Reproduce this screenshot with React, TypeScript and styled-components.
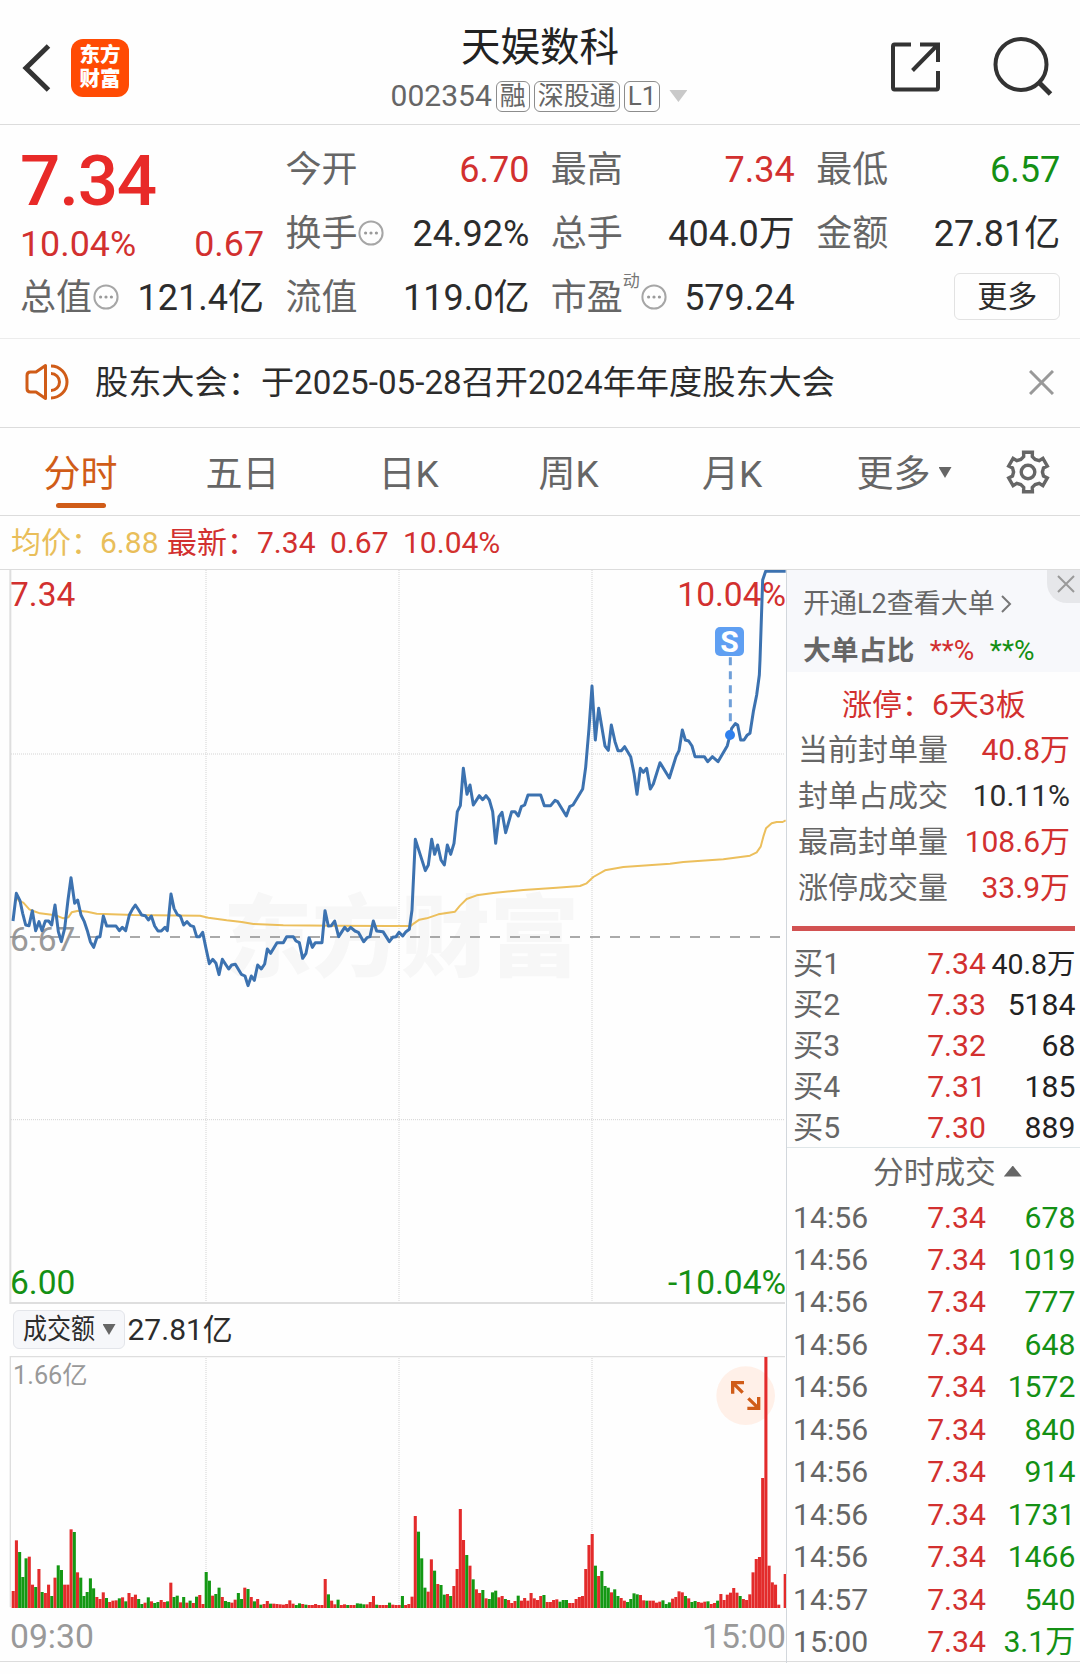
import React from 'react';
import styled, { createGlobalStyle } from 'styled-components';

const c = {
  red: '#d2302f',
  strongRed: '#e82a28',
  green: '#149014',
  ink: '#2c2c2c',
  label: '#666666',
  mute: '#999999',
  line: '#dcdcdc',
  orange: '#d05c18',
  gold: '#e9be5a',
  blue: '#3c72b0',
};

const Global = createGlobalStyle`
  * { box-sizing: border-box; }
  body {
    margin: 0;
    background: #fefefe;
    font-family: Roboto, "Noto Sans CJK SC", sans-serif;
    font-weight: 400;
    line-height: 1.2;
    color: ${c.ink};
  }
  svg { display: block; flex: none; }
`;

const Page = styled.div`
  width: 1080px;
  height: 1674px;
  overflow: hidden;
  display: flex;
  flex-direction: column;
  white-space: nowrap;
`;

/* ---------- header ---------- */
const Header = styled.header`
  height: 125px;
  border-bottom: 1px solid ${c.line};
  display: grid;
  grid-template-columns: 300px 1fr 300px;
`;
const HeaderLeft = styled.div`
  display: flex;
  align-items: center;
  padding: 11px 0 0 20px;
  gap: 18px;
`;
const HeaderRight = styled.div`
  display: flex;
  align-items: center;
  justify-content: flex-end;
  padding: 10.5px 26px 0 0;
  gap: 51.5px;
`;
const Logo = styled.div`
  width: 58px;
  height: 58px;
  border-radius: 12px;
  background: #ff4b04;
  color: #fff;
  font-size: 20.5px;
  line-height: 24.5px;
  font-weight: 900;
  text-align: center;
  padding-top: 4px;
`;
const Heading = styled.div`
  display: flex;
  flex-direction: column;
  align-items: center;
  padding-top: 20px;
`;
const Title = styled.h1`
  margin: 0;
  font-size: 39.5px;
  line-height: 56px;
  font-weight: 400;
  color: #222;
`;
const SubTitle = styled.div`
  display: flex;
  align-items: center;
  height: 40px;
  margin-left: -2px;
  font-size: 30px;
  color: ${c.label};
`;
const Badge = styled.span`
  height: 31px;
  line-height: 29px;
  margin-left: 4px;
  padding: 0 3px;
  border: 1px solid #8c8c8c;
  border-radius: 6px;
  font-size: 26px;
`;
const Caret = styled.i<{ $w: number; $h: number; $color: string; $up?: boolean; $ml: number; $mb?: number }>`
  display: inline-block;
  width: ${p => p.$w}px;
  height: ${p => p.$h}px;
  margin-left: ${p => p.$ml}px;
  margin-bottom: ${p => p.$mb ?? 2}px;
  background: ${p => p.$color};
  clip-path: ${p => (p.$up ? 'polygon(50% 0, 100% 100%, 0 100%)' : 'polygon(0 0, 100% 0, 50% 100%)')};
`;

/* ---------- quote ---------- */
const Quote = styled.section`
  height: 214px;
  padding: 14px 0 0 20px;
  border-bottom: 1px solid #ececec;
  display: grid;
  grid-template-columns: repeat(4, 244px);
  column-gap: 21.4px;
  font-size: 36px;
`;
const QuoteCol = styled.div`
  display: flex;
  flex-direction: column;
`;
const QuoteRow = styled.div<{ $h?: number; $size?: number }>`
  height: ${p => p.$h ?? 64}px;
  font-size: ${p => p.$size ?? 36}px;
  display: flex;
  align-items: center;
  justify-content: space-between;
`;
const Name = styled.span`
  display: flex;
  align-items: center;
  color: ${c.label};
`;
const Num = styled.span<{ $color?: string }>`
  color: ${p => p.$color ?? c.ink};
`;
const BigPrice = styled.div`
  height: 83px;
  line-height: 83px;
  font-size: 71px;
  letter-spacing: -1.2px;
  font-weight: 500;
  color: ${c.strongRed};
`;
const Dyn = styled.sup`
  font-size: 17px;
  line-height: 17px;
  align-self: flex-start;
  margin-top: -4px;
  color: #777;
`;
const MoreButton = styled.button`
  margin: -6px 0 0 auto;
  width: 106px;
  height: 47px;
  padding: 1px 0 0;
  border: 1.5px solid #e2e2e2;
  border-radius: 6px;
  background: transparent;
  font: inherit;
  font-size: 30px;
  color: ${c.ink};
`;

/* ---------- notice ---------- */
const Notice = styled.section`
  height: 89px;
  border-bottom: 1px solid ${c.line};
  padding: 0 26px 2px 24px;
  display: flex;
  align-items: center;
  font-size: 33.2px;
`;
const NoticeText = styled.span`
  flex: 1;
  margin-left: 21px;
  padding-top: 2px;
`;

/* ---------- tabs ---------- */
const Tabs = styled.nav`
  height: 88px;
  border-bottom: 1px solid ${c.line};
  display: grid;
  grid-template-columns: 161px 163px 169px 151px 176px 168px 1fr;
  align-items: center;
  justify-items: center;
`;
const Tab = styled.div<{ $active?: boolean }>`
  display: flex;
  align-items: center;
  height: 87px;
  padding-top: 8px;
  font-size: 37px;
  color: ${p => (p.$active ? c.orange : c.label)};
  position: relative;
  &::after {
    content: '';
    display: ${p => (p.$active ? 'block' : 'none')};
    position: absolute;
    left: 50%;
    bottom: 7px;
    width: 50px;
    height: 5px;
    margin-left: -25px;
    border-radius: 3px;
    background: ${c.orange};
  }
`;
const GearCell = styled.div`
  padding-right: 13px;
`;

/* ---------- legend ---------- */
const Legend = styled.div`
  height: 54px;
  border-bottom: 1px solid ${c.line};
  display: flex;
  align-items: center;
  padding: 1px 0 0 11px;
  font-size: 30px;
  color: ${c.red};
`;
const LegendItem = styled.span<{ $w?: number; $color?: string }>`
  width: ${p => (p.$w ? `${p.$w}px` : 'auto')};
  color: ${p => p.$color ?? 'inherit'};
`;

/* ---------- body ---------- */
const Body = styled.main`
  height: 1092px;
  border-bottom: 1px solid ${c.line};
  display: grid;
  grid-template-columns: 787px 293px;
`;
const Charts = styled.section`
  border-right: 1px solid #d2d7dc;
  display: flex;
  flex-direction: column;
`;
const ChartBox = styled.div<{ $h: number }>`
  position: relative;
  height: ${p => p.$h}px;
`;
const ChartLabel = styled.span<{ $top: number; $right?: boolean; $color: string; $size?: number; $left?: number }>`
  position: absolute;
  top: ${p => p.$top}px;
  ${p => (p.$right ? 'right: 0;' : `left: ${p.$left ?? 10}px;`)}
  font-size: ${p => p.$size ?? 33.5}px;
  line-height: 40px;
  color: ${p => p.$color};
`;
const Watermark = styled.span`
  position: absolute;
  left: 223px;
  top: 309px;
  font-size: 89px;
  line-height: 120px;
  font-weight: 900;
  color: #f7f7f7;
`;
const Layer = styled.svg`
  position: absolute;
  left: 0;
  top: 0;
`;
const Marker = styled.span`
  position: absolute;
  left: 715px;
  top: 57px;
  width: 29px;
  height: 29px;
  border-radius: 5px;
  background: #5f9ff2;
  color: #fff;
  font-size: 30px;
  line-height: 30px;
  font-weight: 700;
  text-align: center;
`;
const TurnoverBar = styled.div`
  height: 51px;
  display: flex;
  align-items: center;
  padding: 0 0 2px 13px;
  font-size: 30px;
`;
const TurnoverSelect = styled.div`
  width: 112px;
  height: 39px;
  display: flex;
  align-items: center;
  justify-content: center;
  background: #f6f7fa;
  border: 1px solid #e3e5ea;
  border-radius: 6px;
  font-size: 24px;
  margin-right: 2.5px;
`;
const Squeezed = styled.span`
  font-size: 28px;
  width: 72px;
  & > span {
    display: inline-block;
    transform: scaleX(0.857);
    transform-origin: left;
  }
`;
const TimeAxis = styled.div`
  height: 54px;
  display: flex;
  align-items: center;
  justify-content: space-between;
  padding: 4px 0 0 10px;
  font-size: 33.7px;
  color: ${c.mute};
`;

/* ---------- side panel ---------- */
const Side = styled.aside`
  display: flex;
  flex-direction: column;
`;
const L2Box = styled.div`
  position: relative;
  height: 102px;
  background: #f7f8fb;
  padding: 11px 0 0 16px;
  color: ${c.label};
`;
const L2Line = styled.div<{ $bold?: boolean }>`
  height: ${p => (p.$bold ? 48 : 46)}px;
  display: flex;
  align-items: center;
  font-size: ${p => (p.$bold ? 27.8 : 27)}px;
  font-weight: ${p => (p.$bold ? 700 : 400)};
`;
const Hidden = styled.span<{ $color: string }>`
  margin-left: 15.5px;
  font-weight: 400;
  font-size: 28px;
  color: ${p => p.$color};
`;
const Dismiss = styled.div`
  position: absolute;
  right: 0;
  top: 0;
  width: 33px;
  height: 33px;
  padding: 5px 0 0 10px;
  background: #e6e7ea;
  border-bottom-left-radius: 20px;
`;
const Limit = styled.div`
  padding: 10px 10px 0 11px;
  height: 254px;
  font-size: 30px;
`;
const LimitTitle = styled.div`
  height: 45px;
  line-height: 45px;
  padding-left: 44px;
  color: ${c.red};
`;
const LimitRow = styled.div`
  height: 46px;
  display: flex;
  align-items: center;
  justify-content: space-between;
`;
const RedBar = styled.div`
  height: 5px;
  margin: 0 5px;
  background: #d25252;
`;
const Orders = styled.div`
  height: 217px;
  padding-top: 12px;
  border-bottom: 1px solid #dfe6e8;
`;
const TradeRow = styled.div<{ $h: number }>`
  height: ${p => p.$h}px;
  padding: 0 4.5px 0 6px;
  display: grid;
  grid-template-columns: 90px 103px 1fr;
  align-items: baseline;
  line-height: ${p => p.$h}px;
  font-size: 30.2px;
  & > :nth-child(1) { color: ${c.label}; }
  & > :nth-child(2) { color: ${c.red}; text-align: right; }
  & > :nth-child(3) { text-align: right; }
`;
const Volume = styled.span<{ $color: string; $size?: number }>`
  color: ${p => p.$color};
  font-size: ${p => p.$size ?? 30.2}px;
`;
const TradesTitle = styled.div`
  height: 48px;
  padding: 2px 0 0 86px;
  display: flex;
  align-items: center;
  font-size: 30.7px;
  color: ${c.label};
`;
const Trades = styled.div`
  padding-top: 0.6px;
`;

/* ---------- icons ---------- */
const Info = () => (
  <svg width="26" height="26" viewBox="0 0 26 26" style={{ marginLeft: 1, overflow: 'visible' }}>
    <circle cx="13" cy="11" r="11.6" fill="none" stroke="#a6a6a6" strokeWidth="2" />
    {[7.6, 13, 18.4].map(x => <circle key={x} cx={x} cy="11" r="1.6" fill="#9a9a9a" />)}
  </svg>
);
const Cross = ({ s, color, w }: { s: number; color: string; w: number }) => (
  <svg width={s} height={s} viewBox={`0 0 ${s} ${s}`}>
    <path d={`M1 1L${s - 1} ${s - 1}M${s - 1} 1L1 ${s - 1}`} stroke={color} strokeWidth={w} />
  </svg>
);
const gearPath = (() => {
  const pts: string[] = [];
  for (let i = 0; i < 6; i++) {
    const a = (i * Math.PI) / 3 - Math.PI / 2;
    [[-0.22, 20.2], [0.22, 20.2], [0.27, 16], [0.525, 14.4], [0.777, 16]].forEach(([d, r]) =>
      pts.push(`${(22 + r * Math.cos(a + d)).toFixed(1)} ${(22 + r * Math.sin(a + d)).toFixed(1)}`));
  }
  return `M${pts.join('L')}Z`;
})();

/* ---------- chart data, three units to the pixel ---------- */
const parse = (s: string, dx: number, dy: number) =>
  s.trim().split(/\s+/).map(p => p.split(',').map(Number)).map(([x, y]) => `${x + dx},${y + dy}`).join(' ');

const pricePoints = [
  parse(`39,243 49,160 60,182 68,220 77,255 87,257 97,212 107,272 117,245 126,272 136,243 146,243 155,255 165,195
    175,275 184,305 194,265 204,180 213,113 224,190 233,180 243,225 253,245 262,272 271,305 281,322 291,292 300,290
    310,228 320,258 348,258 358,272 367,262 377,272 388,225 397,208 406,195 416,210 425,225 436,227 445,240 454,228
    464,258 474,273 484,273 495,262 502,272 513,162 522,205 532,224 541,228 551,255 561,245 572,257 581,260 590,290
    599,290 608,277 618,325 628,371 638,358 648,370 657,404 667,358 686,387 695,375 706,373 724,403 735,408 744,437
    754,408 763,421 773,375 784,387 794,372 802,327 812,340 831,308 850,308 860,290 880,290 888,303 898,308 908,355
    918,340 927,293 937,322 946,308 966,308 975,212 985,258 994,257 1004,243 1016,290 1034,262 1043,272 1052,262
    1065,273 1075,277 1091,305 1101,293 1110,290 1120,243 1130,273 1149,275 1168,305 1178,292 1188,290 1197,277`, 0, 810),
  parse(`38,828 48,815 58,808 66,750 76,538 106,632 115,615 125,538 134,583 143,555 153,600 163,615 172,555 182,583
    192,550 202,455 211,437 220,325 231,403 240,375 250,435 268,407 278,419 288,407 298,420 308,455 317,550 327,470
    336,457 347,518 365,455 375,455 385,468 394,440 404,435 414,405 452,405 463,437 482,437 495,421 503,425 529,468
    539,440 549,435 578,387 587,322 597,205 606,78 616,240 626,145 645,258 655,271 664,195 675,245 684,272 694,272
    704,260 722,290 732,340 741,403 751,325 760,337 770,325 781,387 790,372 810,308 838,354 858,290 867,272 877,210
    886,240 896,243 906,258 915,290 943,290 953,305 967,290 984,305 1012,257 1025,205 1036,191 1043,195 1052,240
    1062,240 1071,226 1080,220 1090,155 1100,105 1108,45 1110,0 1116,-180 1118,-240 1127,-266 1187,-266`, 1170, 270),
].join(' ');

const averagePoints = [
  parse(`49,170 57,183 70,188 88,208 100,213 120,220 155,224 175,229 190,235 205,232 215,217 235,212 262,215 290,221
    400,225 600,227 625,233 680,241 725,246 760,252 850,256 1000,257`, 0, 810),
  parse(`0,798 62,798 72,790 88,779 110,775 145,763 195,755 210,737 230,717 260,706 310,699 400,690 500,683 570,678
    590,670 610,651 645,631 700,621 840,611 880,606 1000,598 1080,587 1100,577 1112,560 1120,530 1128,505 1145,490
    1160,486 1178,486 1187,481`, 1170, 270),
].join(' ');

const morningBars = `r51 r203 g168 g93 g149 r154 r70 g63 r117 g48 r45 r70 g36 r91 g128 g114 r70 r70 r236 g228
  r107 g91 g36 g48 g89 g59 r33 r27 r47 g30 r18 r22 r23 g29 r32 g20 r45 r33 r40 g27
  g12 r16 g32 r20 g15 g18 r24 r18 g20 r76 g33 g37 r17 g33 r16 g22 r15 g34 r39 r12
  g108 g82 r37 g42 g61 r33 g21 g18 r16 r25 g45 g27 r61 g57 r33 g20 r27 g10 r12 r21
  g13 r13 r12 r11 r10 r12 r23 r13 g9 g14 r12 g10 r9 r9 r12 r9 r9 r87 g41 r22
  r11 g25 r9 r11 g9 r9 r9 g14 g13 g11 r11 r18 r36 g10 r9 r9 r9 g16 r10 r9 r9`;
const afternoonBars = `g36 r9 r12 r34 r276 g229 g149 g61 r49 r146 g112 r72 g69 g40 r42 g36 r66 r117 r297 r204
  g159 r127 g86 r56 r45 g54 r29 g27 g47 g52 r32 r36 g27 r24 r15 r21 g37 r22 r30 r22
  r45 r29 r24 r36 g39 r18 r18 r24 r26 g19 g24 g24 r15 r15 r27 r33 r36 r117 r189 r222
  g127 r96 g111 g66 g61 r47 g56 g36 r30 r22 g18 g27 g44 g41 r39 r23 g22 r22 r22 r16
  r19 g23 g12 g17 r28 r33 r50 r47 g36 r29 g18 g21 r18 r16 r19 g20 r12 r15 g22 r42
  r24 r40 r46 r60 r46 g36 r27 r24 r41 r107 r147 r153 r390 r753 r127 r77 r70 r10 r0 r102`;
const bars = `${morningBars} ${afternoonBars}`.trim().split(/\s+/).map(b => ({
  color: b[0] === 'r' ? '#e32b2b' : '#149814',
  h: Number(b.slice(1)),
}));

const gridX = [618, 1197, 1776];

const orders = [
  ['买1', '7.34', '40.8万'],
  ['买2', '7.33', '5184'],
  ['买3', '7.32', '68'],
  ['买4', '7.31', '185'],
  ['买5', '7.30', '889'],
];
const trades = [
  ['14:56', '678'], ['14:56', '1019'], ['14:56', '777'], ['14:56', '648'], ['14:56', '1572'], ['14:56', '840'],
  ['14:56', '914'], ['14:56', '1731'], ['14:56', '1466'], ['14:57', '540'], ['15:00', '3.1万'],
];
const limits = [
  ['当前封单量', '40.8万', c.red],
  ['封单占成交', '10.11%', c.ink],
  ['最高封单量', '108.6万', c.red],
  ['涨停成交量', '33.9万', c.red],
];

const PriceChart = () => (
  <ChartBox $h={735}>
    <Watermark>东方财富</Watermark>
    <ChartLabel $top={5} $color={c.red}>7.34</ChartLabel>
    <ChartLabel $top={5} $right $color={c.red}>10.04%</ChartLabel>
    <ChartLabel $top={350} $color={c.mute}>6.67</ChartLabel>
    <ChartLabel $top={693} $color={c.green}>6.00</ChartLabel>
    <ChartLabel $top={693} $right $color={c.green}>-10.04%</ChartLabel>
    <Layer width="786" height="735" viewBox="0 0 2358 2205">
      <g stroke="#d4d4d4" strokeWidth="3" strokeDasharray="3 3">
        {gridX.map(x => <path key={x} d={`M${x} 0V2196`} />)}
        <path d="M33 552H2355M33 1649H2355" />
      </g>
      <path d="M31 0V2199H2355" fill="none" stroke="#dedede" strokeWidth="6" />
      <path d="M30 1101H2355" stroke="#8f8f8f" strokeWidth="5" strokeDasharray="30 30" />
      <polyline points={averagePoints} fill="none" stroke="#ecbf5c" strokeWidth="6" strokeLinejoin="round" />
      <polyline points={pricePoints} fill="none" stroke={c.blue} strokeWidth="9" strokeLinejoin="round" />
      <path d="M2191 262V462" stroke="#6f9fd8" strokeWidth="9" strokeDasharray="24 18" />
      <circle cx="2190" cy="495" r="15" fill="#2f80ee" />
    </Layer>
    <Marker>S</Marker>
  </ChartBox>
);

const VolumeChart = () => (
  <ChartBox $h={252}>
    <ChartLabel $top={0} $left={13} $size={25.3} $color={c.mute}>1.66亿</ChartLabel>
    <Layer width="786" height="252" viewBox="0 0 2358 756">
      <g stroke="#d4d4d4" strokeWidth="3" strokeDasharray="3 3">
        {gridX.map(x => <path key={x} d={`M${x} 0V754`} />)}
      </g>
      <path d="M31 754V2H2355" fill="none" stroke="#dedede" strokeWidth="4" />
      <circle cx="2237" cy="119" r="88" fill="#fff0e8" />
      <g fill="none" stroke={c.orange} strokeWidth="10">
        <path d="M2198 113V80H2232M2198 80L2228 110M2242 157H2276V123M2276 157L2245 127" />
      </g>
      {bars.map((b, i) => (
        <rect key={i} x={35 + i * 9.65} y={756 - b.h} width="9.2" height={b.h} fill={b.color} />
      ))}
    </Layer>
  </ChartBox>
);

export default function App() {
  return (
    <Page>
      <Global />
      <Header>
        <HeaderLeft>
          <svg width="33" height="52" viewBox="0 0 33 52">
            <path d="M28.500 4L6 26L28.500 48" fill="none" stroke="#333" strokeWidth="5" />
          </svg>
          <Logo>东方<br />财富</Logo>
        </HeaderLeft>
        <Heading>
          <Title>天娱数科</Title>
          <SubTitle>
            002354
            <Badge>融</Badge>
            <Badge>深股通</Badge>
            <Badge>L1</Badge>
            <Caret $w={18} $h={12} $ml={9} $mb={0} $color="#c9c9c9" />
          </SubTitle>
        </Heading>
        <HeaderRight>
          <svg width="52" height="52" viewBox="0 0 52 52" fill="none" stroke="#333" strokeWidth="4">
            <path d="M22 3.500H5.500Q4 3.500 4 5.500V46.500Q4 48.500 5.500 48.500H47.500Q49 48.500 49 46.500V30M31 3.500H49V21M48.500 4L23.500 29.500" />
          </svg>
          <svg width="62" height="62" viewBox="0 0 62 62" fill="none" stroke="#333" strokeWidth="4">
            <circle cx="29" cy="28.500" r="25.500" />
            <path d="M46.500 46L58.500 58" strokeWidth="5" />
          </svg>
        </HeaderRight>
      </Header>

      <Quote>
        <QuoteCol>
          <BigPrice>7.34</BigPrice>
          <QuoteRow $h={45} $size={35.8}><Num $color={c.red}>10.04%</Num><Num $color={c.red}>0.67</Num></QuoteRow>
          <QuoteRow><Name>总值<Info /></Name><Num>121.4亿</Num></QuoteRow>
        </QuoteCol>
        <QuoteCol>
          <QuoteRow><Name>今开</Name><Num $color={c.red}>6.70</Num></QuoteRow>
          <QuoteRow><Name>换手<Info /></Name><Num>24.92%</Num></QuoteRow>
          <QuoteRow><Name>流值</Name><Num>119.0亿</Num></QuoteRow>
        </QuoteCol>
        <QuoteCol>
          <QuoteRow><Name>最高</Name><Num $color={c.red}>7.34</Num></QuoteRow>
          <QuoteRow><Name>总手</Name><Num>404.0万</Num></QuoteRow>
          <QuoteRow><Name>市盈<Dyn>动</Dyn><Info /></Name><Num>579.24</Num></QuoteRow>
        </QuoteCol>
        <QuoteCol>
          <QuoteRow><Name>最低</Name><Num $color={c.green}>6.57</Num></QuoteRow>
          <QuoteRow><Name>金额</Name><Num>27.81亿</Num></QuoteRow>
          <QuoteRow><MoreButton>更多</MoreButton></QuoteRow>
        </QuoteCol>
      </Quote>

      <Notice>
        <svg width="50" height="40" viewBox="0 0 50 40" fill="none" stroke={c.orange} strokeWidth="3">
          <path d="M21.500 3.500V36.500L12 30H6.500Q3 30 3 26.500V13.500Q3 10 6.500 10H12Z" strokeLinejoin="round" />
          <path d="M27 11.500A8.500 8.500 0 0 1 27 28.500M27 4A16 16 0 0 1 27 36" />
        </svg>
        <NoticeText>股东大会：于2025-05-28召开2024年年度股东大会</NoticeText>
        <Cross s={25} color="#999" w={3} />
      </Notice>

      <Tabs>
        <Tab $active>分时</Tab>
        <Tab>五日</Tab>
        <Tab>日K</Tab>
        <Tab>周K</Tab>
        <Tab>月K</Tab>
        <Tab>更多<Caret $w={13} $h={11} $ml={8} $mb={6} $color="#666" /></Tab>
        <GearCell>
          <svg width="44" height="44" viewBox="0 0 44 44" fill="none" stroke="#666" strokeWidth="3.400">
            <path d={gearPath} strokeLinejoin="miter" />
            <circle cx="22" cy="22" r="6.800" />
          </svg>
        </GearCell>
      </Tabs>

      <Legend>
        <LegendItem $w={89} $color={c.gold}>均价：</LegendItem>
        <LegendItem $w={67} $color={c.gold}>6.88</LegendItem>
        <LegendItem $w={90}>最新：</LegendItem>
        <LegendItem $w={73}>7.34</LegendItem>
        <LegendItem $w={73}>0.67</LegendItem>
        <LegendItem>10.04%</LegendItem>
      </Legend>

      <Body>
        <Charts>
          <PriceChart />
          <TurnoverBar>
            <TurnoverSelect>
              <Squeezed><span>成交额</span></Squeezed>
              <Caret $w={13} $h={11} $ml={8} $mb={0} $color="#666" />
            </TurnoverSelect>
            27.81亿
          </TurnoverBar>
          <VolumeChart />
          <TimeAxis><span>09:30</span><span>15:00</span></TimeAxis>
        </Charts>

        <Side>
          <L2Box>
            <L2Line>
              开通L2查看大单
              <svg width="12" height="20" viewBox="0 0 12 20" style={{ marginLeft: 5 }}>
                <path d="M2 2L10 10L2 18" fill="none" stroke="#777" strokeWidth="2" />
              </svg>
            </L2Line>
            <L2Line $bold>
              大单占比
              <Hidden $color={c.red}>**%</Hidden>
              <Hidden $color={c.green}>**%</Hidden>
            </L2Line>
            <Dismiss><Cross s={18} color="#999" w={2} /></Dismiss>
          </L2Box>
          <Limit>
            <LimitTitle>涨停：6天3板</LimitTitle>
            {limits.map(([name, value, color]) => (
              <LimitRow key={name}><Name>{name}</Name><Num $color={color}>{value}</Num></LimitRow>
            ))}
          </Limit>
          <RedBar />
          <Orders>
            {orders.map(([name, price, vol]) => (
              <TradeRow key={name} $h={41}>
                <span>{name}</span>
                <span>{price}</span>
                <Volume $color="#222" $size={vol.endsWith('万') ? 28.5 : 30.2}>{vol}</Volume>
              </TradeRow>
            ))}
          </Orders>
          <TradesTitle>分时成交<Caret $w={18} $h={11} $ml={8} $mb={4} $up $color="#666" /></TradesTitle>
          <Trades>
            {trades.map(([time, vol], i) => (
              <TradeRow key={i} $h={42.45}>
                <span>{time}</span>
                <span>7.34</span>
                <Volume $color={c.green}>{vol}</Volume>
              </TradeRow>
            ))}
          </Trades>
        </Side>
      </Body>
    </Page>
  );
}
